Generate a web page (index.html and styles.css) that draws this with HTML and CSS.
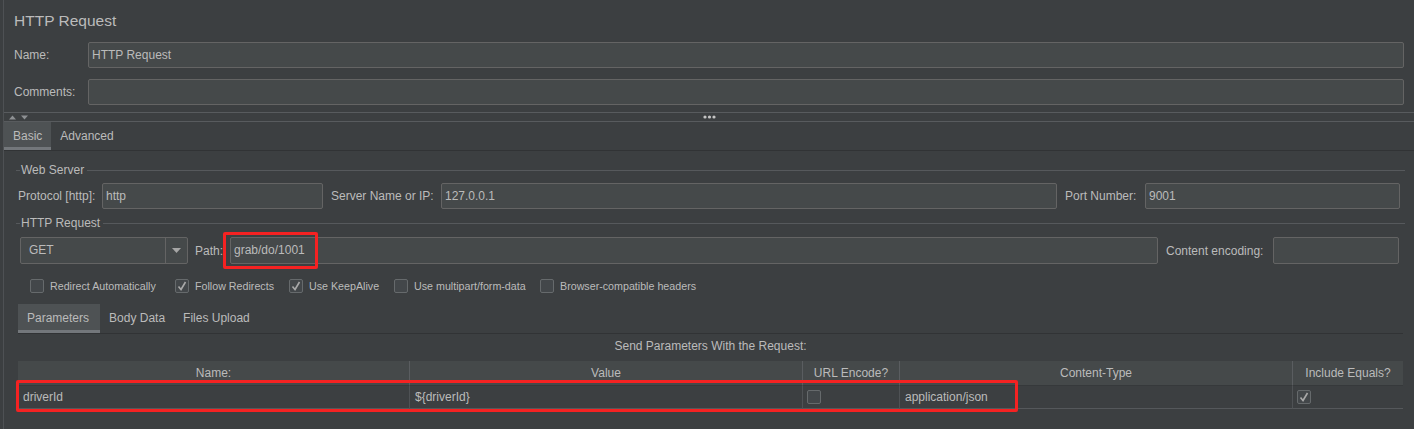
FILE: index.html
```html
<!DOCTYPE html>
<html>
<head>
<meta charset="utf-8">
<title>HTTP Request</title>
<link rel="stylesheet" href="styles.css">
</head>
<body>
<div class="app">
  <div class="title">HTTP Request</div>
  <div class="form-row first">
    <span class="form-label">Name:</span>
    <div class="input">HTTP Request</div>
  </div>
  <div class="form-row second">
    <span class="form-label">Comments:</span>
    <div class="input"></div>
  </div>
  <div class="divider">
    <div class="arrows">
      <svg width="22" height="5" viewBox="0 0 22 5"><path d="M0 4.5 L3.5 0.5 L7 4.5 Z" fill="#8d9093"/><path d="M12 0.5 L19 0.5 L15.5 4.5 Z" fill="#8d9093"/></svg>
    </div>
    <div class="dots">
      <svg width="13" height="4" viewBox="0 0 13 4"><circle cx="2" cy="2" r="1.6" fill="#c4c4c4"/><circle cx="6.5" cy="2" r="1.6" fill="#c4c4c4"/><circle cx="11" cy="2" r="1.6" fill="#c4c4c4"/></svg>
    </div>
    <div></div>
  </div>
  <div class="tabs main-tabs">
    <div class="tab active">Basic</div>
    <div class="tab">Advanced</div>
  </div>
  <div class="panel">
    <div class="legend"><span>Web Server</span></div>
    <div class="field-row server-row">
      <span class="lbl lbl-protocol">Protocol [http]:</span>
      <div class="input w-protocol">http</div>
      <span class="lbl lbl-server">Server Name or IP:</span>
      <div class="input grow">127.0.0.1</div>
      <span class="lbl lbl-port">Port Number:</span>
      <div class="input w-port">9001</div>
    </div>
    <div class="legend second-legend"><span>HTTP Request</span></div>
    <div class="field-row request-row">
      <div class="combo">
        <span class="combo-text">GET</span>
        <span class="combo-btn"><svg width="9" height="5" viewBox="0 0 9 5"><path d="M0 0 L9 0 L4.5 5 Z" fill="#a6a6a6"/></svg></span>
      </div>
      <span class="lbl lbl-path">Path:</span>
      <div class="input grow tall">grab/do/1001</div>
      <span class="lbl lbl-enc">Content encoding:</span>
      <div class="input w-enc tall"></div>
    </div>
    <div class="checks">
      <label class="check"><span class="box"></span>Redirect Automatically</label>
      <label class="check"><span class="box"><svg width="12" height="12" viewBox="0 0 12 12"><path d="M2.5 6.5 L5 9.5 L9.5 2" fill="none" stroke="#a9a9a9" stroke-width="1.6"/></svg></span>Follow Redirects</label>
      <label class="check"><span class="box"><svg width="12" height="12" viewBox="0 0 12 12"><path d="M2.5 6.5 L5 9.5 L9.5 2" fill="none" stroke="#a9a9a9" stroke-width="1.6"/></svg></span>Use KeepAlive</label>
      <label class="check"><span class="box"></span>Use multipart/form-data</label>
      <label class="check"><span class="box"></span>Browser-compatible headers</label>
    </div>
    <div class="tabs sub-tabs">
      <div class="tab active sub-first">Parameters</div>
      <div class="tab">Body Data</div>
      <div class="tab">Files Upload</div>
    </div>
    <div class="caption">Send Parameters With the Request:</div>
    <div class="table">
      <div class="th">Name:</div>
      <div class="th">Value</div>
      <div class="th">URL Encode?</div>
      <div class="th">Content-Type</div>
      <div class="th last">Include Equals?</div>
      <div class="td">driverId</div>
      <div class="td">${driverId}</div>
      <div class="td"><span class="box"></span></div>
      <div class="td">application/json</div>
      <div class="td last"><span class="box"><svg width="12" height="12" viewBox="0 0 12 12"><path d="M2.5 6.5 L5 9.5 L9.5 2" fill="none" stroke="#a9a9a9" stroke-width="1.6"/></svg></span></div>
    </div>
  </div>
</div>
<div class="mark mark-path"></div>
<div class="mark mark-row"></div>
</body>
</html>
```
FILE: styles.css
```css
* { box-sizing: border-box; }
html, body { margin: 0; padding: 0; }
body {
  width: 1414px;
  height: 429px;
  overflow: hidden;
  position: relative;
  background: #3c3f41;
  color: #bbbbbb;
  font-family: "Liberation Sans", Arial, sans-serif;
  font-size: 12px;
}
.app {
  margin-left: 3px;
  height: 429px;
  border-left: 1px solid #4e5154;
}
.title {
  font-size: 15.5px;
  line-height: 22px;
  height: 32px;
  padding: 10px 0 0 10px;
}
.form-row {
  display: flex;
  align-items: center;
  padding: 0 10px;
}
.form-row.first { margin-top: 10px; }
.form-row.second { margin-top: 11px; }
.form-label { width: 74px; }
.input {
  flex: 1;
  height: 26px;
  line-height: 24px;
  background: #45494a;
  border: 1px solid #646464;
  border-radius: 2px;
  padding: 0 3px;
  color: #bbbbbb;
  white-space: nowrap;
}
.input.tall { height: 27px; line-height: 25px; }
.divider {
  margin-top: 7px;
  height: 10px;
  border-top: 1px solid #585b5e;
  border-bottom: 1px solid #585b5e;
  display: grid;
  grid-template-columns: 1fr auto 1fr;
  align-items: center;
}
.arrows { padding-left: 5px; display: flex; align-items: center; }
.arrows svg, .dots svg { display: block; }
.tabs {
  display: flex;
  border-bottom: 1px solid #313335;
}
.main-tabs { height: 29px; }
.tab {
  padding: 0 9px;
  line-height: 28px;
  height: 28px;
}
.tab.active {
  background: #4e5254;
  box-shadow: inset 0 -3px 0 #73777b;
}
.panel { padding: 12px 9px 0 12px; }
.legend {
  display: flex;
  align-items: center;
  height: 14px;
}
.legend::before {
  content: "";
  width: 4px;
  border-top: 1px solid #56595c;
}
.legend::after {
  content: "";
  flex: 1;
  margin-left: 3px;
  border-top: 1px solid #56595c;
}
.legend span { padding-left: 1px; }
.second-legend { margin-top: 7px; }
.field-row {
  display: flex;
  align-items: center;
}
.server-row { margin-top: 6px; padding: 0 5px 0 2px; }
.request-row { margin-top: 7px; padding: 0 6px 0 4px; }
.lbl { white-space: nowrap; }
.input + .lbl { margin-left: 8px; }
.lbl-protocol { width: 84px; }
.lbl-server { width: 110px; }
.lbl-port { width: 80px; }
.lbl-path { width: 35px; margin-left: 7px; }
.lbl-enc { width: 107px; }
.w-protocol { flex: 0 0 221px; }
.w-port { flex: 0 0 255px; }
.w-enc { flex: 0 0 126px; }
.grow { flex: 1; }
.combo {
  width: 168px;
  height: 27px;
  display: flex;
  background: #45494a;
  border: 1px solid #646464;
  border-radius: 2px;
}
.combo-text { flex: 1; padding-left: 8px; line-height: 25px; }
.combo-btn {
  width: 22px;
  border-left: 1px solid #646464;
  display: flex;
  align-items: center;
  justify-content: center;
}
.combo-btn svg { display: block; }
.checks {
  margin-top: 15px;
  padding-left: 14px;
  display: grid;
  grid-template-columns: 145px 114px 105px 146px auto;
  font-size: 10.7px;
}
.check {
  display: flex;
  align-items: center;
  height: 14px;
}
.box {
  width: 14px;
  height: 14px;
  border: 1px solid #666a6c;
  border-radius: 2px;
  background: #43474a;
  display: inline-flex;
  align-items: center;
  justify-content: center;
  flex: 0 0 14px;
}
.box svg { display: block; }
.check .box { margin-right: 6px; }
.sub-tabs {
  margin: 11px 2px 0 2px;
  height: 30px;
}
.sub-tabs .tab { height: 29px; line-height: 29px; }
.sub-tabs .sub-first { padding: 0 11px 0 9px; }
.caption {
  margin: 0 2px;
  text-align: center;
  line-height: 24px;
  height: 24px;
}
.table {
  margin: 3px 2px 0 2px;
  display: grid;
  grid-template-columns: 392px 393px 97px 393px 110px;
}
.th {
  background: #45494a;
  height: 25px;
  line-height: 24px;
  text-align: center;
  border-right: 1px solid #5a5d60;
  border-bottom: 1px solid #36393b;
  white-space: nowrap;
}
.th.last, .td.last { border-right: none; }
.td {
  height: 23px;
  line-height: 22px;
  border-right: 1px solid #4f5255;
  border-bottom: 1px solid #55585b;
  display: flex;
  align-items: center;
  padding-left: 5px;
}
.td .box { margin-left: -1px; }
.mark {
  position: absolute;
  border: 3px solid #f52222;
  border-radius: 2px;
}
.mark-path { left: 223px; top: 232px; width: 95px; height: 37px; }
.mark-row { left: 16px; top: 380px; width: 1002px; height: 32px; }
```
